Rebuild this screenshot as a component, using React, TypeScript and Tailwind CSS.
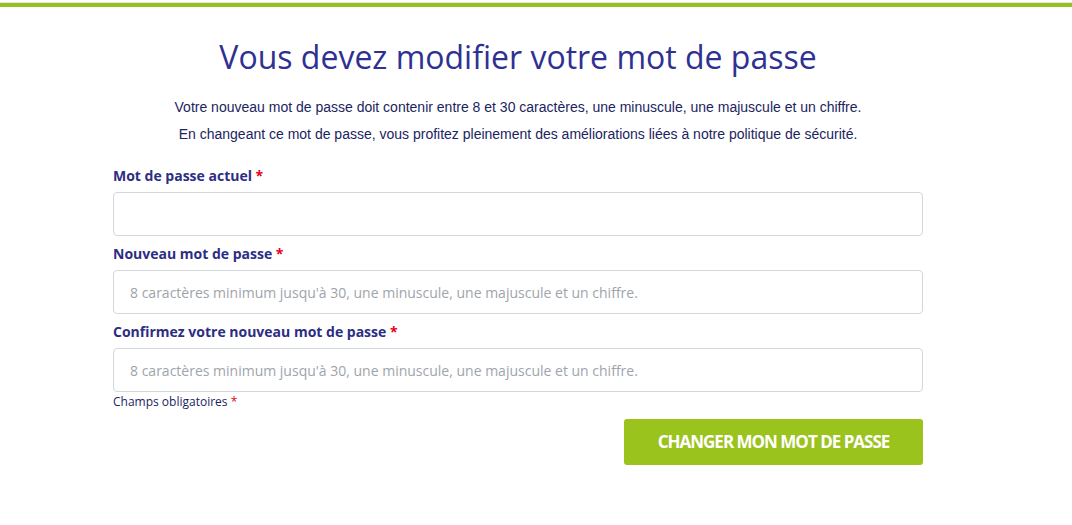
import React from "react";

const navy = "text-[#2d2e83]";

function Field({ label, placeholder }: { label: string; placeholder?: string }) {
  return (
    <div className="flex flex-col">
      <label className={`mt-2 mb-[6px] text-[14px] leading-[20px] font-bold ${navy}`} style={{ fontFamily: '"Open Sans", sans-serif' }}>
        {label} <span className="text-[#e3001b]">*</span>
      </label>
      <input
        type="password"
        placeholder={placeholder}
        className="h-[44px] w-full rounded-[4px] border border-[#d3d8de] bg-white px-4 text-[14px] text-[#555] outline-none placeholder:text-[#9ea4ab]"
        style={{ fontFamily: '"Open Sans", sans-serif' }}
      />
    </div>
  );
}

export default function App() {
  const ph = "8 caractères minimum jusqu'à 30, une minuscule, une majuscule et un chiffre.";
  return (
    <div className="min-h-[525px] w-[1072px] bg-white">
      <div className="h-[2px] bg-white" />
      <div className="h-px bg-[#e4e4e4]" />
      <div className="h-[4px] bg-[#97c11f]" />
      <div className="ml-[113px] w-[810px] flex flex-col">
        <h1
          className="mt-[32px] text-center text-[32px] leading-[36px] text-[#2e3192]"
          style={{ fontFamily: '"Open Sans", sans-serif' }}
        >
          Vous devez modifier votre mot de passe
        </h1>
        <div className="mt-[22px] flex flex-col gap-[7px] text-center text-[14px] leading-[20px] text-[#1b2460]" style={{ fontFamily: '"Liberation Sans", Arial, sans-serif' }}>
          <p>Votre nouveau mot de passe doit contenir entre 8 et 30 caractères, une minuscule, une majuscule et un chiffre.</p>
          <p>En changeant ce mot de passe, vous profitez pleinement des améliorations liées à notre politique de sécurité.</p>
        </div>
        <div className="mt-[14px] flex flex-col">
          <Field label="Mot de passe actuel" />
          <Field label="Nouveau mot de passe" placeholder={ph} />
          <Field label="Confirmez votre nouveau mot de passe" placeholder={ph} />
          <div className={`mt-[2px] text-[12px] leading-[16px] text-[#1b2460]`} style={{ fontFamily: '"Open Sans", sans-serif' }}>
            Champs obligatoires <span className="text-[#e3001b]">*</span>
          </div>
          <div className="mt-[9px] flex justify-end">
            <button
              className="h-[46px] w-[299px] rounded-[3px] bg-[#9bc31e] text-[17px] font-bold uppercase tracking-[-1px] text-white"
              style={{ fontFamily: '"Open Sans", sans-serif' }}
            >
              Changer mon mot de passe
            </button>
          </div>
        </div>
      </div>
    </div>
  );
}
